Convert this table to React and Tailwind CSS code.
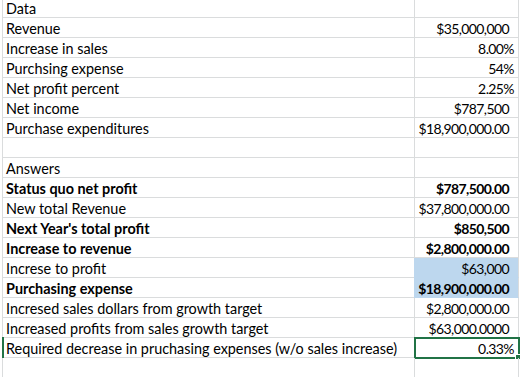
const rows = [
  { label: "Data", value: "" },
  { label: "Revenue", value: "$35,000,000" },
  { label: "Increase in sales", value: "8.00%", pct: true },
  { label: "Purchsing expense", value: "54%", pct: true },
  { label: "Net profit percent", value: "2.25%", pct: true },
  { label: "Net income", value: "$787,500" },
  { label: "Purchase expenditures", value: "$18,900,000.00" },
  { label: "", value: "" },
  { label: "Answers", value: "" },
  { label: "Status quo net profit", value: "$787,500.00", bold: true },
  { label: "New total Revenue", value: "$37,800,000.00" },
  { label: "Next Year's total profit", value: "$850,500", bold: true },
  { label: "Increase to revenue", value: "$2,800,000.00", bold: true },
  { label: "Increse to profit", value: "$63,000", fill: true },
  { label: "Purchasing expense", value: "$18,900,000.00", bold: true, fill: true },
  { label: "Incresed sales dollars from growth target", value: "$2,800,000.00" },
  { label: "Increased profits from sales growth target", value: "$63,000.0000" },
  {
    label: "Required decrease in pruchasing expenses (w/o sales increase)",
    value: "0.33%",
    pct: true,
    selected: true,
  },
  { label: "", value: "" },
];

const App = () => {
  return (
    <div
      className="w-[520px] h-[377px] overflow-hidden bg-white text-black"
      style={{ fontFamily: "Lato, 'Open Sans', sans-serif" }}
    >
      <div className="mt-[-2px] ml-[2px]">
        {rows.map((row, i) => (
          <div key={i} className="flex h-[20px]">
            {/* Column A */}
            <div
              className={`relative w-[412px] h-[20px] border-l border-b border-[#dadcdd] pl-[3px] pt-[1px] text-[14.4px] leading-[19px] whitespace-nowrap ${
                row.bold ? "font-bold" : ""
              }`}
            >
              {row.selected && (
                <div className="absolute left-[-1px] top-[-1px] w-[2px] h-[21px] bg-[#217346]" />
              )}
              {row.label}
            </div>

            {/* Column B */}
            <div
              className={`relative w-[105px] h-[20px] border-l border-r border-b text-right pt-[1px] text-[14px] tracking-[-0.6px] leading-[19px] whitespace-nowrap ${
                row.fill
                  ? "bg-[#bdd7ee] border-l-[#bdd7ee] border-b-[#bdd7ee] border-r-[#dadcdd]"
                  : "border-[#dadcdd]"
              } ${row.pct ? "pr-[4px]" : "pr-[9px]"} ${
                row.bold ? "font-bold" : ""
              }`}
            >
              {row.value}
              {row.selected && (
                <div className="absolute left-[-1px] top-[-1px] w-[106px] h-[22px] border-2 border-[#217346]">
                  <div className="absolute right-[-3px] bottom-[-3px] w-[6px] h-[6px] bg-[#217346] border border-white" />
                </div>
              )}
            </div>
          </div>
        ))}
      </div>
    </div>
  );
};

export default App;
